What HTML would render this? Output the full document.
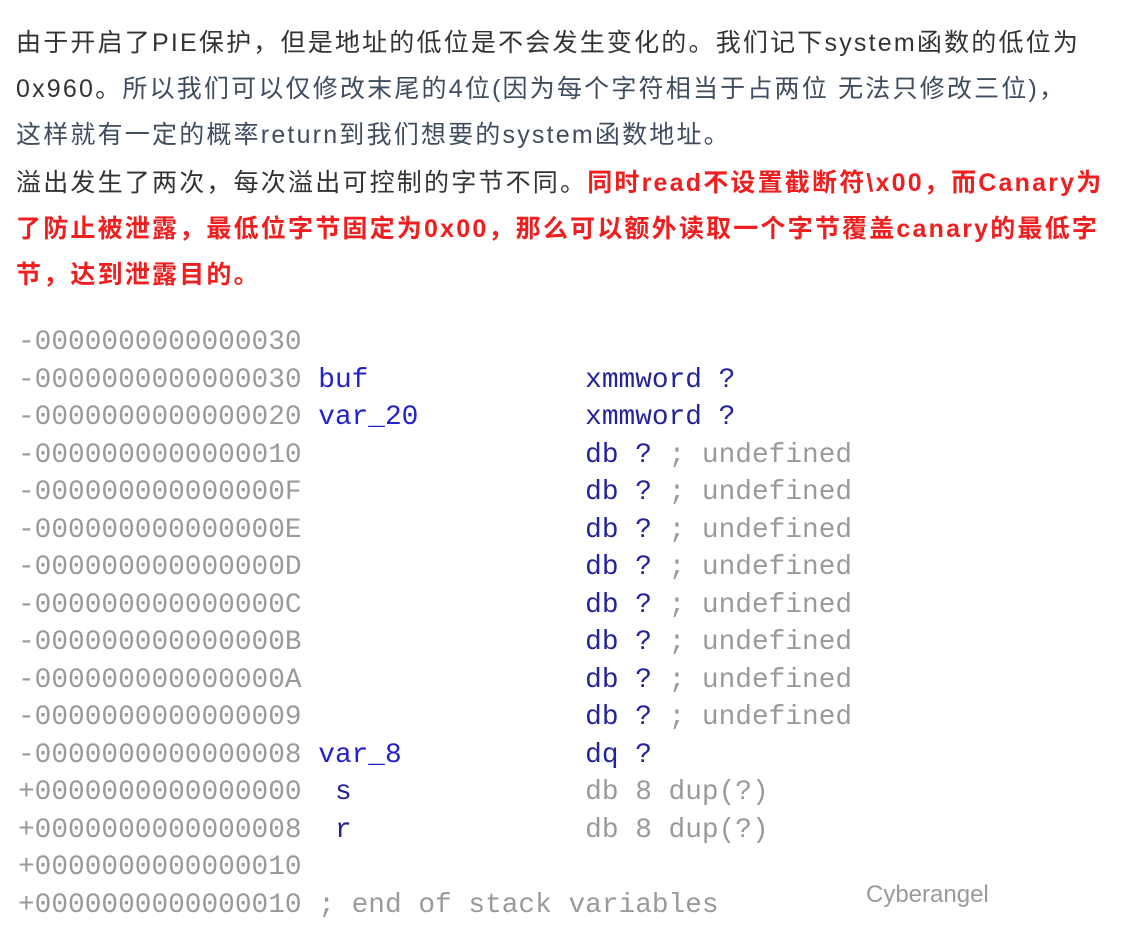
<!DOCTYPE html>
<html><head><meta charset="utf-8"><style>
html,body{margin:0;padding:0;background:#fff;width:1130px;height:933px;overflow:hidden;position:relative}
.t{position:absolute;left:16px;white-space:nowrap;font-family:"Liberation Sans","Noto Sans CJK SC",sans-serif;font-size:25px;letter-spacing:2.2px;line-height:30px;color:#333}
.b{color:#3f4d5f}
.r{color:#f01e1e;font-weight:bold}
.c{position:absolute;left:18px;top:324px;font-family:"Liberation Mono","DejaVu Sans Mono",monospace;font-size:27.8px;line-height:37.53px;color:#9a9a9a;white-space:pre;margin:0}
.n{color:#2222cc}
.k{color:#24249a}
.wm{position:absolute;font-family:"Liberation Sans",sans-serif;color:#9a9a9a;font-size:24px}
</style></head><body>
<div class="t" style="top:28px">由于开启了PIE保护，但是地址的低位是不会发生变化的。我们记下system函数的低位为</div>
<div class="t" style="top:74px">0x960。<span class="b">所以我们可以仅修改末尾的4位(因为每个字符相当于占两位 无法只修改三位)，</span></div>
<div class="t b" style="top:120px">这样就有一定的概率return到我们想要的system函数地址。</div>
<div class="t" style="top:168px">溢出发生了两次，每次溢出可控制的字节不同。<span class="r">同时read不设置截断符\x00，而Canary为</span></div>
<div class="t r" style="top:214px">了防止被泄露，最低位字节固定为0x00，那么可以额外读取一个字节覆盖canary的最低字</div>
<div class="t r" style="top:260px">节，达到泄露目的。</div>
<pre class="c">-0000000000000030
-0000000000000030 <span class="n">buf</span>             <span class="k">xmmword ?</span>
-0000000000000020 <span class="n">var_20</span>          <span class="k">xmmword ?</span>
-0000000000000010                 <span class="k">db ?</span> ; undefined
-000000000000000F                 <span class="k">db ?</span> ; undefined
-000000000000000E                 <span class="k">db ?</span> ; undefined
-000000000000000D                 <span class="k">db ?</span> ; undefined
-000000000000000C                 <span class="k">db ?</span> ; undefined
-000000000000000B                 <span class="k">db ?</span> ; undefined
-000000000000000A                 <span class="k">db ?</span> ; undefined
-0000000000000009                 <span class="k">db ?</span> ; undefined
-0000000000000008 <span class="n">var_8</span>           <span class="k">dq ?</span>
+0000000000000000  <span class="k">s</span>              db 8 dup(?)
+0000000000000008  <span class="k">r</span>              db 8 dup(?)
+0000000000000010
+0000000000000010 ; end of stack variables</pre>
<div class="wm" style="left:866px;top:881px">Cyberangel</div>
</body></html>
